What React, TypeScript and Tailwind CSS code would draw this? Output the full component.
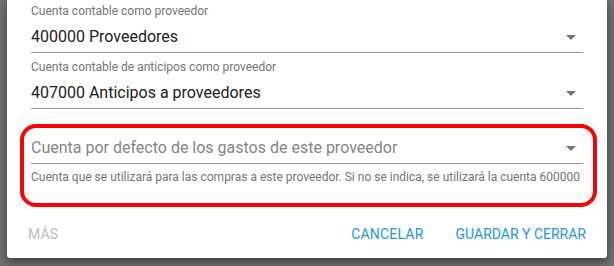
import React from "react";

function Arrow() {
  return (
    <svg viewBox="0 0 24 24" className="w-6 h-6 shrink-0 fill-[#757575]">
      <path d="M7 10l5 5 5-5z" />
    </svg>
  );
}

function SelectField({ label, value }: { label: string; value: string }) {
  return (
    <div className="flex flex-col">
      <div className="text-[12px] leading-[16px] text-[#757575]">{label}</div>
      <div className="mt-[6px] flex items-center border-b border-[#949494] pb-[3px]">
        <div className="flex-1 text-[16px] leading-[24px] text-[#212121]">{value}</div>
        <Arrow />
      </div>
    </div>
  );
}

export default function App() {
  return (
    <div
      className="w-[614px] h-[266px] bg-[#707070] overflow-hidden"
      style={{ fontFamily: "Roboto, 'Liberation Sans', sans-serif" }}
    >
      <div className="ml-[7px] w-[600px] h-[258px] bg-white rounded-b-[3px] shadow-[0_4px_10px_rgba(0,0,0,0.45)] flex flex-col">
        <div className="px-[24px] pt-[3px] flex flex-col">
          <SelectField label="Cuenta contable como proveedor" value="400000 Proveedores" />
          <div className="mt-[6px]">
            <SelectField label="Cuenta contable de anticipos como proveedor" value="407000 Anticipos a proveedores" />
          </div>
          <div className="relative mt-[27px] flex flex-col">
            <div className="flex items-center border-b border-[#949494] pb-[3px]">
              <div className="flex-1 text-[16px] leading-[24px] text-[#858585]">
                Cuenta por defecto de los gastos de este proveedor
              </div>
              <Arrow />
            </div>
            <div className="mt-[5px] text-[12px] leading-[16px] text-[#757575]">
              Cuenta que se utilizará para las compras a este proveedor. Si no se indica, se utilizará la cuenta 600000
            </div>
            <div className="absolute left-[-11px] right-[-14px] top-[-12px] bottom-[-22px] border-4 border-[#ff0000] rounded-[16px] pointer-events-none" />
          </div>
        </div>
        <div className="mt-auto mb-[14px] flex items-center pl-[13px] pr-[13px]">
          <button className="px-[8px] text-[14px] leading-[20px] font-normal tracking-[0.1px] text-[#bdbdbd]">
            MÁS
          </button>
          <div className="flex-1" />
          <button className="px-[8px] text-[14px] leading-[20px] font-normal tracking-[0.2px] text-[#2196f3]">
            CANCELAR
          </button>
          <button className="ml-[16px] px-[8px] text-[14px] leading-[20px] font-normal tracking-[0px] text-[#2196f3]">
            GUARDAR Y CERRAR
          </button>
        </div>
      </div>
    </div>
  );
}
